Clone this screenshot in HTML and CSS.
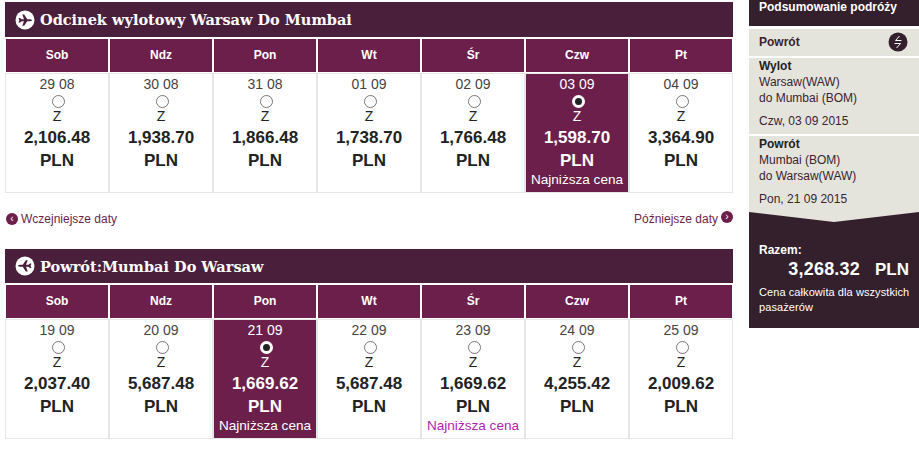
FILE: index.html
```html
<!DOCTYPE html>
<html lang="pl">
<head>
  <meta charset="UTF-8" />
  <title>Podsumowanie podróży</title>
  <link rel="stylesheet" href="styles.css">
</head>
<body>

<div class="page">
  <main class="flights">

    <section class="leg">
      <h2 class="leg-title">
        <svg class="plane" viewBox="0 0 20 20"><circle cx="10" cy="10" r="9.5" fill="#fff"/><path d="M3.5 8 L5 8 L6.5 9.2 L9 9.2 L7.3 4.5 L9.2 4.5 L12.2 9.2 L15 9.2 Q17.2 9.5 17.2 10.2 Q17.2 10.9 15 11.2 L12.2 11.2 L9.2 15.7 L7.3 15.7 L9 11.2 L6.5 11.2 L5 12.4 L3.5 12.4 L4.4 10.2 Z" fill="#4a1f3b"/></svg>
        Odcinek wylotowy Warsaw Do Mumbai
      </h2>
      <div class="days">
        <div class="day-name">Sob</div><div class="day-name">Ndz</div><div class="day-name">Pon</div><div class="day-name">Wt</div><div class="day-name">Śr</div><div class="day-name">Czw</div><div class="day-name">Pt</div>

        <div class="fare"><span class="date">29 08</span><span class="radio"></span><span class="cls">Z</span><b class="price">2,106.48</b><b class="cur">PLN</b></div>
        <div class="fare"><span class="date">30 08</span><span class="radio"></span><span class="cls">Z</span><b class="price">1,938.70</b><b class="cur">PLN</b></div>
        <div class="fare"><span class="date">31 08</span><span class="radio"></span><span class="cls">Z</span><b class="price">1,866.48</b><b class="cur">PLN</b></div>
        <div class="fare"><span class="date">01 09</span><span class="radio"></span><span class="cls">Z</span><b class="price">1,738.70</b><b class="cur">PLN</b></div>
        <div class="fare"><span class="date">02 09</span><span class="radio"></span><span class="cls">Z</span><b class="price">1,766.48</b><b class="cur">PLN</b></div>
        <div class="fare selected"><span class="date">03 09</span><span class="radio"></span><span class="cls">Z</span><b class="price">1,598.70</b><b class="cur">PLN</b><span class="lowest">Najniższa cena</span></div>
        <div class="fare"><span class="date">04 09</span><span class="radio"></span><span class="cls">Z</span><b class="price">3,364.90</b><b class="cur">PLN</b></div>
      </div>
      <div class="date-nav">
        <a class="nav-link prev"><span class="nav-dot">‹</span>Wczejniejsze daty</a>
        <a class="nav-link next">Późniejsze daty<span class="nav-dot">›</span></a>
      </div>
    </section>

    <section class="leg">
      <h2 class="leg-title">
        <svg class="plane" viewBox="0 0 20 20"><circle cx="10" cy="10" r="9.5" fill="#fff"/><path transform="rotate(180 10 10)" d="M3.5 8 L5 8 L6.5 9.2 L9 9.2 L7.3 4.5 L9.2 4.5 L12.2 9.2 L15 9.2 Q17.2 9.5 17.2 10.2 Q17.2 10.9 15 11.2 L12.2 11.2 L9.2 15.7 L7.3 15.7 L9 11.2 L6.5 11.2 L5 12.4 L3.5 12.4 L4.4 10.2 Z" fill="#4a1f3b"/></svg>
        Powrót:Mumbai Do Warsaw
      </h2>
      <div class="days">
        <div class="day-name">Sob</div><div class="day-name">Ndz</div><div class="day-name">Pon</div><div class="day-name">Wt</div><div class="day-name">Śr</div><div class="day-name">Czw</div><div class="day-name">Pt</div>

        <div class="fare"><span class="date">19 09</span><span class="radio"></span><span class="cls">Z</span><b class="price">2,037.40</b><b class="cur">PLN</b></div>
        <div class="fare"><span class="date">20 09</span><span class="radio"></span><span class="cls">Z</span><b class="price">5,687.48</b><b class="cur">PLN</b></div>
        <div class="fare selected"><span class="date">21 09</span><span class="radio"></span><span class="cls">Z</span><b class="price">1,669.62</b><b class="cur">PLN</b><span class="lowest">Najniższa cena</span></div>
        <div class="fare"><span class="date">22 09</span><span class="radio"></span><span class="cls">Z</span><b class="price">5,687.48</b><b class="cur">PLN</b></div>
        <div class="fare"><span class="date">23 09</span><span class="radio"></span><span class="cls">Z</span><b class="price">1,669.62</b><b class="cur">PLN</b><span class="lowest">Najniższa cena</span></div>
        <div class="fare"><span class="date">24 09</span><span class="radio"></span><span class="cls">Z</span><b class="price">4,255.42</b><b class="cur">PLN</b></div>
        <div class="fare"><span class="date">25 09</span><span class="radio"></span><span class="cls">Z</span><b class="price">2,009.62</b><b class="cur">PLN</b></div>
      </div>
    </section>

  </main>

  <aside class="summary">
    <div class="summary-top">Podsumowanie podróży</div>
    <div class="summary-type">
      <strong>Powrót</strong>
      <svg class="swap" viewBox="0 0 20 20"><circle cx="10" cy="10" r="9.5" fill="#33202c"/><path d="M11.5 4 L7.5 8.5 L13.5 8.5 M8.5 16 L12.5 11.5 L6.5 11.5" fill="none" stroke="#fff" stroke-width="1"/></svg>
    </div>
    <div class="summary-leg">
      <strong>Wylot</strong>
      <span>Warsaw(WAW)</span>
      <span>do Mumbai (BOM)</span>
      <span class="leg-date">Czw, 03 09 2015</span>
    </div>
    <div class="summary-leg">
      <strong>Powrót</strong>
      <span>Mumbai (BOM)</span>
      <span>do Warsaw(WAW)</span>
      <span class="leg-date">Pon, 21 09 2015</span>
    </div>
    <div class="summary-total">
      <div class="total-label">Razem:</div>
      <div class="total-price"><span class="total-amount">3,268.32</span><span>PLN</span></div>
      <p class="total-note">Cena całkowita dla wszystkich pasażerów</p>
    </div>
  </aside>
</div>

</body>
</html>
```

FILE: styles.css
```css
html, body { margin: 0; padding: 0; }
body {
  font-family: "Liberation Sans", Arial, sans-serif;
  background: #fff;
  color: #222;
}
.page {
  display: flex;
  align-items: flex-start;
  padding-left: 5px;
}
.flights { width: 728px; padding-top: 2px; }
.leg { height: 247px; }
.leg:last-child { height: 190px; }

.leg-title {
  display: flex; align-items: center; gap: 5px;
  height: 35px; margin: 0; padding-left: 10px;
  background: #4a1f3b; color: #fff;
  font-family: "DejaVu Serif", serif;
  font-size: 14.5px; font-weight: bold;
}
.leg + .leg .leg-title { height: 34px; }
.plane { width: 20px; height: 20px; flex: none; }

.days {
  display: grid;
  grid-template-columns: repeat(7, 104px);
  margin-top: 1px;
}
.day-name {
  height: 33px; line-height: 33px;
  margin: 1px 1px 0;
  background: #6c1f4b; color: #fff;
  font-size: 12px; font-weight: bold;
  text-align: center;
}
.fare {
  display: flex; flex-direction: column; align-items: center;
  height: 120px; margin-top: 1px;
  box-sizing: border-box;
  border: 1px solid #e6e6e6;
  color: #222;
}
.selected { background: #6c1f4b; color: #fff; }
.date { font-size: 14px; line-height: 16px; margin-top: 2px; color: #444; }
.selected .date { color: #fff; }
.radio {
  flex: none;
  width: 11px; height: 11px; margin: 3px 0 0 2px;
  border: 1px solid #777; border-radius: 50%;
  background: #fff;
}
.selected .radio {
  width: 7px; height: 7px;
  border: 3px solid #fff;
  background: #222;
}
.cls { font-size: 14px; line-height: 15px; margin-top: 1px; }
.price { font-size: 17px; line-height: 20px; margin-top: 4px; }
.cur { font-size: 17px; line-height: 20px; margin-top: 3px; }
.lowest { font-size: 13.6px; line-height: 16px; margin-top: 1px; color: #b01fb0; }
.selected .lowest { color: #fff; }

.date-nav {
  display: flex; justify-content: space-between;
  margin-top: 19px;
  font-size: 12px;
}
.nav-link { display: flex; align-items: center; color: #6c1f4b; }
.prev { gap: 3px; padding-left: 1px; }
.next { gap: 3px; }
.next .nav-dot { margin-top: -5px; }
.nav-dot {
  width: 12px; height: 12px; border-radius: 50%;
  background: #6c1f4b; color: #fff;
  font-size: 10px; line-height: 11px; text-align: center;
}

.summary {
  width: 170px; margin-left: 16px;
  font-size: 12px; color: #3a2430;
}
.summary-top {
  height: 26px; padding: 0 10px;
  background: #33202c; color: #fff;
  font-weight: bold; line-height: 14px;
}
.summary-type {
  display: flex; justify-content: space-between; align-items: center;
  box-sizing: border-box;
  height: 27px; margin-top: 3px; padding: 0 11px 2px 10px;
  background: #e4e3dc;
}
.swap { width: 20px; height: 20px; flex: none; }
.summary-leg {
  display: flex; flex-direction: column;
  height: 76px; margin-top: 2px; padding: 0 10px;
  background: #e4e3dc;
  line-height: 16px;
}
.summary-leg strong { color: #222; }
.leg-date { margin-top: 7px; }
.summary-total {
  position: relative;
  height: 116px; padding: 0 10px;
  background: #33202c; color: #fff;
}
.summary-total::before {
  content: ""; position: absolute; left: 0; top: 0;
  width: 170px; height: 10px;
  background: #e4e3dc;
  clip-path: polygon(0 0, 100% 0, 50% 100%);
}
.total-label { padding-top: 30px; font-weight: bold; line-height: 16px; }
.total-price {
  display: flex; justify-content: flex-end; align-items: baseline; gap: 15px;
  padding-top: 1px;
  font-size: 17px; font-weight: bold; line-height: 20px;
}
.total-amount { font-size: 18px; letter-spacing: .2px; }
.total-note { margin: 5px -6px 0 0; font-size: 11px; letter-spacing: .08px; line-height: 15px; }
```
